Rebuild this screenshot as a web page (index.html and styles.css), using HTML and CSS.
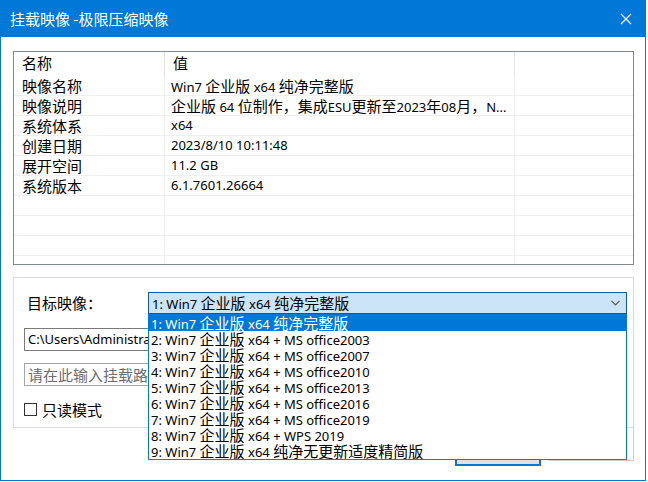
FILE: index.html
```html
<!DOCTYPE html>
<html>
<head>
<meta charset="utf-8">
<title>挂载映像</title>
<link rel="stylesheet" href="styles.css">
</head>
<body>
<div class="window">
  <div class="titlebar">
    <span class="title">挂载映像 -极限压缩映像</span>
    <svg class="close" width="12" height="12" viewBox="0 0 12 12"><path d="M1 1L11 11M11 1L1 11" stroke="#fff" stroke-width="1.1" fill="none"/></svg>
  </div>
  <div class="client">
    <div class="listview">
      <div class="lv-head">
        <div class="hc c1 z">名称</div>
        <div class="hc c2 z">值</div>
        <div class="hc c3"></div>
      </div>
      <div class="lv-row"><div class="cell c1 z">映像名称</div><div class="cell c2">Win7 <span class="z">企业版</span> x64 <span class="z">纯净完整版</span></div><div class="cell c3"></div></div>
      <div class="lv-row"><div class="cell c1 z">映像说明</div><div class="cell c2"><span class="z">企业版</span> 64 <span class="z">位制作，集成</span>ESU<span class="z">更新至</span>2023<span class="z">年</span>08<span class="z">月，</span>N...</div><div class="cell c3"></div></div>
      <div class="lv-row"><div class="cell c1 z">系统体系</div><div class="cell c2">x64</div><div class="cell c3"></div></div>
      <div class="lv-row"><div class="cell c1 z">创建日期</div><div class="cell c2">2023/8/10 10:11:48</div><div class="cell c3"></div></div>
      <div class="lv-row"><div class="cell c1 z">展开空间</div><div class="cell c2">11.2 GB</div><div class="cell c3"></div></div>
      <div class="lv-row"><div class="cell c1 z">系统版本</div><div class="cell c2">6.1.7601.26664</div><div class="cell c3"></div></div>
      <div class="lv-row"><div class="cell c1"></div><div class="cell c2"></div><div class="cell c3"></div></div>
      <div class="lv-row"><div class="cell c1"></div><div class="cell c2"></div><div class="cell c3"></div></div>
      <div class="lv-row"><div class="cell c1"></div><div class="cell c2"></div><div class="cell c3"></div></div>
      <div class="lv-row"><div class="cell c1"></div><div class="cell c2"></div><div class="cell c3"></div></div>
    </div>

    <div class="group">
      <div class="target-row">
        <span class="label z">目标映像：</span>
        <div class="combo">
          <span class="combo-text">1: Win7 <span class="z">企业版</span> x64 <span class="z">纯净完整版</span></span>
          <svg class="chev" width="9" height="6" viewBox="0 0 9 6"><path d="M0.5 0.8L4.5 4.8L8.5 0.8" stroke="#5a5a5a" stroke-width="1.2" fill="none"/></svg>
          <ul class="droplist">
            <li class="sel">1: Win7 <span class="z">企业版</span> x64 <span class="z">纯净完整版</span></li>
            <li>2: Win7 <span class="z">企业版</span> x64 + MS office2003</li>
            <li>3: Win7 <span class="z">企业版</span> x64 + MS office2007</li>
            <li>4: Win7 <span class="z">企业版</span> x64 + MS office2010</li>
            <li>5: Win7 <span class="z">企业版</span> x64 + MS office2013</li>
            <li>6: Win7 <span class="z">企业版</span> x64 + MS office2016</li>
            <li>7: Win7 <span class="z">企业版</span> x64 + MS office2019</li>
            <li>8: Win7 <span class="z">企业版</span> x64 + WPS 2019</li>
            <li>9: Win7 <span class="z">企业版</span> x64 <span class="z">纯净无更新适度精简版</span></li>
          </ul>
        </div>
      </div>
      <div class="textbox path">C:\Users\Administrator\Desktop\Win7_x64.esd</div>
      <div class="textbox mount z">请在此输入挂载路径</div>
      <div class="check"><span class="box"></span><span class="z">只读模式</span></div>
    </div>

    <div class="buttons">
      <div class="btn default"></div>
      <div class="panel"></div>
    </div>
  </div>
</div>
</body>
</html>
```

FILE: styles.css
```css
html, body {
  margin: 0;
  padding: 0;
  background: #ffffff;
}

body {
  font-family: "Noto Sans", "Noto Sans CJK SC", sans-serif;
  font-size: 13px;
  color: #000;
}

.z {
  font-family: "Noto Sans CJK SC", sans-serif;
  font-size: 15px;
}

.window {
  width: 646px;
  height: 481px;
  box-sizing: border-box;
  border: 1px solid #0078d7;
  display: flex;
  flex-direction: column;
  overflow: hidden;
}

.titlebar {
  height: 36px;
  flex: none;
  background: #0078d7;
  color: #fff;
  display: flex;
  align-items: center;
  justify-content: space-between;
  padding: 0 13px 0 9px;
}

.title {
  font-family: "Noto Sans CJK SC", sans-serif;
  font-size: 15px;
  line-height: 20px;
}

.close {
  display: block;
}

.client {
  flex: 1;
  padding: 14px 11px 0 12px;
  display: flex;
  flex-direction: column;
}

/* List view */
.listview {
  width: 621px;
  height: 214px;
  box-sizing: border-box;
  border: 1px solid #828790;
  overflow: hidden;
  flex: none;
}

.lv-head,
.lv-row {
  display: flex;
}

.lv-head {
  height: 24px;
}

.lv-row {
  height: 20px;
  box-sizing: border-box;
  border-bottom: 1px solid #f0f0f0;
}

.c1 { width: 151px; }
.c2 { width: 350px; }
.c3 { flex: 1; }

.hc {
  box-sizing: border-box;
  padding-left: 8px;
  line-height: 22px;
  height: 24px;
}

.hc.c1,
.hc.c2 {
  border-right: 1px solid #e5e5e5;
}

.cell {
  box-sizing: border-box;
  padding-left: 8px;
  line-height: 19px;
  white-space: nowrap;
  overflow: hidden;
}

.cell.c1,
.cell.c2 {
  border-right: 1px solid #f0f0f0;
}

.cell.c2 {
  padding-left: 6px;
}

/* Group box */
.group {
  margin-top: 12px;
  width: 621px;
  height: 151px;
  box-sizing: border-box;
  border: 1px solid #dcdcdc;
  padding: 14px 10px 0 10px;
  display: flex;
  flex-direction: column;
  flex: none;
}

.target-row {
  display: flex;
  align-items: center;
  height: 22px;
}

.label {
  width: 124px;
  flex: none;
  box-sizing: border-box;
  padding-left: 3px;
  line-height: 20px;
}

.combo {
  position: relative;
  width: 479px;
  height: 22px;
  flex: none;
  box-sizing: border-box;
  border: 1px solid #0a5aa5;
  background: #cce4f7;
  display: flex;
  align-items: center;
  justify-content: space-between;
  padding: 0 6px 0 3px;
}

.combo-text {
  line-height: 18px;
  white-space: nowrap;
}

.chev {
  display: block;
}

.droplist {
  position: absolute;
  left: -1px;
  top: 21px;
  width: 479px;
  box-sizing: border-box;
  margin: 0;
  padding: 0;
  list-style: none;
  background: #fff;
  border: 1px solid #0078d7;
  z-index: 5;
}

.droplist li {
  height: 16px;
  line-height: 16px;
  padding-left: 2px;
  white-space: nowrap;
  overflow: hidden;
}

.droplist li.sel {
  background: #0078d7;
  color: #fff;
}

.textbox {
  width: 470px;
  height: 23px;
  box-sizing: border-box;
  border: 1px solid #7a7a7a;
  padding-left: 3px;
  line-height: 21px;
  white-space: nowrap;
  overflow: hidden;
}

.textbox.path {
  margin-top: 14px;
}

.textbox.mount {
  margin-top: 12px;
  border-color: #a6a6a6;
  color: #6d6d6d;
}

.check {
  margin-top: 15px;
  display: flex;
  align-items: center;
  height: 16px;
}

.box {
  width: 13px;
  height: 13px;
  box-sizing: border-box;
  border: 1px solid #333333;
  background: #fff;
  margin-right: 5px;
}

/* Buttons */
.buttons {
  display: flex;
  justify-content: flex-end;
  align-items: flex-start;
  gap: 7px;
}

.btn {
  width: 86px;
  height: 28px;
  margin-top: 10px;
  box-sizing: border-box;
  background: #e1e1e1;
  border: 2px solid #0078d7;
}

.panel {
  width: 86px;
  height: 33px;
  box-sizing: border-box;
  background: #fff;
  border: 1px solid #d0d0d0;
  border-top: none;
}
```
